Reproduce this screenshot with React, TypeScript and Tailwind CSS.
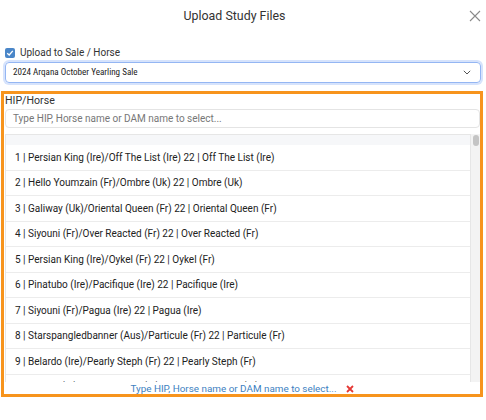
import React from "react";

const rows = [
  "1 | Persian King (Ire)/Off The List (Ire) 22 | Off The List (Ire)",
  "2 | Hello Youmzain (Fr)/Ombre (Uk) 22 | Ombre (Uk)",
  "3 | Galiway (Uk)/Oriental Queen (Fr) 22 | Oriental Queen (Fr)",
  "4 | Siyouni (Fr)/Over Reacted (Fr) 22 | Over Reacted (Fr)",
  "5 | Persian King (Ire)/Oykel (Fr) 22 | Oykel (Fr)",
  "6 | Pinatubo (Ire)/Pacifique (Ire) 22 | Pacifique (Ire)",
  "7 | Siyouni (Fr)/Pagua (Ire) 22 | Pagua (Ire)",
  "8 | Starspangledbanner (Aus)/Particule (Fr) 22 | Particule (Fr)",
  "9 | Belardo (Ire)/Pearly Steph (Fr) 22 | Pearly Steph (Fr)",
  "10 | Zarak (Fr)/Pensee Floral (Fr) 22 | Pensee Floral (Fr)",
];

export default function App() {
  return (
    <div
      className="w-[486px] h-[420px] bg-white overflow-hidden flex flex-col"
      style={{ fontFamily: "Roboto, 'Liberation Sans', sans-serif" }}
    >
      {/* Header */}
      <div className="h-[32px] flex items-center">
        <div className="flex-1 text-center text-[12.4px] text-[#333] leading-none">Upload Study Files</div>
        <div className="w-[17px] flex justify-start">
          <svg width="12" height="12" viewBox="0 0 12 12" className="block">
            <path d="M1 1 L11 11 M11 1 L1 11" stroke="#8a8a8a" strokeWidth="1.1" fill="none" />
          </svg>
        </div>
      </div>

      {/* Checkbox row */}
      <div className="mt-[14px] h-[14px] pl-[5px] flex items-center gap-[5px]">
        <div className="w-[10px] h-[10px] rounded-[2px] bg-[#4a86c8] flex items-center justify-center">
          <svg width="8" height="8" viewBox="0 0 8 8" className="block">
            <path d="M1.2 4.2 L3.2 6 L6.8 1.8" stroke="white" strokeWidth="1.3" fill="none" />
          </svg>
        </div>
        <span className="text-[10px] text-[#333] leading-none">Upload to Sale / Horse</span>
      </div>

      {/* Select */}
      <div className="mt-[2px] mx-[5px] h-[21px] rounded-[4px] border border-[#94b6f3] shadow-[0_0_0_2px_#d6e3fc] flex items-center justify-between pl-[7px] pr-[9px]">
        <span
          className="text-[9.1px] text-[#222] leading-none"
          style={{ fontFamily: "'Roboto Condensed', Roboto, sans-serif" }}
        >
          2024 Arqana October Yearling Sale
        </span>
        <svg width="8" height="5" viewBox="0 0 8 5" className="block">
          <path d="M0.8 0.8 L4 4 L7.2 0.8" stroke="#555" strokeWidth="1" fill="none" />
        </svg>
      </div>

      {/* Orange box */}
      <div className="mt-[8px] ml-[1px] w-[482px] h-[306px] border-[3px] border-[#f7941d] flex flex-col">
        <div className="pl-[1px] h-[14px] text-[10.6px] leading-[14px] text-[#333]">HIP/Horse</div>
        <div className="mt-[1px] ml-[1px] mr-0 h-[20px] rounded-[4px] border border-[#e4e4e4] flex items-center pl-[7px]">
          <span className="text-[10px] text-[#777] leading-none">Type HIP, Horse name or DAM name to select...</span>
        </div>

        <div className="mt-[6px] ml-[1px] h-[248px] flex">
          <div className="flex-1 border-l border-t border-r border-[#e6e6e6] overflow-hidden flex flex-col">
            <div className="h-[10px] bg-[#f6f7f9] shrink-0" />
            {rows.map((r) => (
              <div
                key={r}
                className="h-[25.5px] shrink-0 border-b border-[#ececec] flex items-center pl-[9px] text-[10px] text-[#222] whitespace-nowrap"
              >
                {r}
              </div>
            ))}
          </div>
          <div className="w-[9px] bg-[#f3f3f3]">
            <div className="mx-auto mt-[1px] w-[6px] h-[11px] rounded-[3px] bg-[#c4c4c4]" />
          </div>
        </div>

        <div className="flex-1 flex items-center justify-center gap-[9px] pt-[2px]">
          <span className="text-[9.9px] text-[#3d7fc1] leading-none">Type HIP, Horse name or DAM name to select...</span>
          <svg width="8" height="8" viewBox="0 0 8 8" className="block">
            <path d="M1 1 L7 7 M7 1 L1 7" stroke="#e53935" strokeWidth="1.8" fill="none" />
          </svg>
        </div>
      </div>
    </div>
  );
}
